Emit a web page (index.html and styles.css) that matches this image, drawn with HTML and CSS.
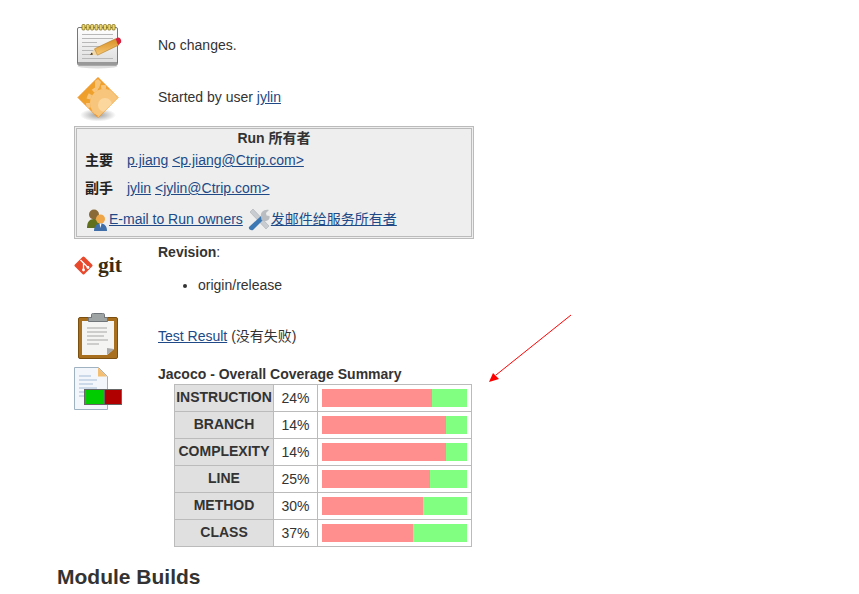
FILE: index.html
```html
<!DOCTYPE html>
<html lang="zh">
<head>
    <meta charset="utf-8" />
    <title>Build</title>
    <link rel="stylesheet" href="styles.css">
</head>
<body>
<div id="main">
    <div class="row row-changes">
        <div class="icon">
            <svg width="48" height="48" viewBox="0 0 48 48">
                <defs>
                    <linearGradient id="padg" x1="0" y1="0" x2="0" y2="1"><stop offset="0" stop-color="#fff"/><stop offset="1" stop-color="#dcdcdc"/></linearGradient>
                    <linearGradient id="peng" x1="0" y1="0" x2="0" y2="1"><stop offset="0" stop-color="#d98f25"/><stop offset="1" stop-color="#f6c873"/></linearGradient>
                </defs>
                <ellipse cx="23.500" cy="44" rx="20" ry="2.500" fill="#ddd"/>
                <rect x="3.500" y="5.500" width="40" height="37.500" rx="1.500" fill="url(#padg)" stroke="#777"/>
                <rect x="4" y="40" width="39" height="3" fill="#999"/>
                <path d="M8 12.500h31M8 16.500h31M8 20.500h15M8 24.500h31M8 28.500h22M8 32.500h10M8 36.500h31" stroke="#b8b8b8"/>
                <g fill="#ecd86e" stroke="#85701a" stroke-width=".8">
                    <rect x="8" y="2.500" width="3" height="5.500" rx="1"/>
                    <rect x="12.300" y="2.500" width="3" height="5.500" rx="1"/>
                    <rect x="16.600" y="2.500" width="3" height="5.500" rx="1"/>
                    <rect x="20.900" y="2.500" width="3" height="5.500" rx="1"/>
                    <rect x="25.200" y="2.500" width="3" height="5.500" rx="1"/>
                    <rect x="29.500" y="2.500" width="3" height="5.500" rx="1"/>
                    <rect x="33.800" y="2.500" width="3" height="5.500" rx="1"/>
                    <rect x="38.100" y="2.500" width="3" height="5.500" rx="1"/>
                </g>
                <path d="M16 33l4.500-6.200 3 6.400z" fill="#f1d9ae"/>
                <path d="M16 33l1.800-2.500 1.200 2.100z" fill="#3a2a10"/>
                <path d="M20.500 26.800l21-10 3 6.400-21 10z" fill="url(#peng)" stroke="#a86f17" stroke-width=".5"/>
                <path d="M41.500 16.800l2.500-1.200c2-.5 3.800 2.800 3 4.600l-2.500 3z" fill="#d9213c"/>
            </svg>
        </div>
        <div class="text">No changes.</div>
    </div>
    <div class="row row-cause">
        <div class="icon">
            <svg width="48" height="48" viewBox="0 0 48 48">
                <defs>
                    <linearGradient id="diag" x1="0" y1="0" x2="1" y2="1"><stop offset="0" stop-color="#ec9a20"/><stop offset="1" stop-color="#f4ad45"/></linearGradient>
                    <radialGradient id="shad"><stop offset="0" stop-color="#9c9c9c"/><stop offset="1" stop-color="#fff"/></radialGradient>
                    <clipPath id="diaclip"><path d="M24 3.500L44 23.500 24 43.500 4 23.500z"/></clipPath>
                </defs>
                <ellipse cx="24" cy="41" rx="18" ry="6.500" fill="url(#shad)"/>
                <path d="M24 3.500L44 23.500 24 43.500 4 23.500z" fill="url(#diag)" stroke="#f2901e"/>
                <g clip-path="url(#diaclip)">
                    <circle cx="30" cy="29" r="14" fill="#f8c57c"/>
                    <circle cx="30" cy="29" r="16" fill="none" stroke="#f8c57c" stroke-width="4" stroke-dasharray="5 4"/>
                    <circle cx="31" cy="31" r="7" fill="#fbd79e"/>
                    <path d="M21 7l3-2 3 3-2 6-4 3z" fill="#f7c477"/>
                </g>
            </svg>
        </div>
        <div class="text">Started by user <a href="#">jylin</a></div>
    </div>
    <div class="owners">
        <div class="owners-title">Run 所有者</div>
        <div class="owner-line"><b>主要</b><span><a href="#">p.jiang</a> <a href="#">&lt;p.jiang@Ctrip.com&gt;</a></span></div>
        <div class="owner-line"><b>副手</b><span><a href="#">jylin</a> <a href="#">&lt;jylin@Ctrip.com&gt;</a></span></div>
        <div class="owner-links">
            <svg class="small-icon" width="24" height="24" viewBox="0 0 24 24">
                <circle cx="9" cy="7.500" r="5" fill="#8a6a36"/>
                <path d="M2 21c0-6 2.500-9 7-9s6 3 6 9z" fill="#5f6f1e"/>
                <circle cx="15.500" cy="12" r="4.500" fill="#eea648"/>
                <path d="M9 24c0-5 2.500-7.500 6.500-7.500S22 19 22 24z" fill="#3f6ea8"/>
                <path d="M14.500 16.500h2l-1 4.500z" fill="#fff"/>
            </svg>
            <a href="#">E-mail to Run owners</a>
            <svg class="small-icon tools" width="24" height="24" viewBox="0 0 24 24">
                <path d="M3 5l3-3 16 17-3 3z" fill="#c9ccd0" stroke="#a2a6ab" stroke-width=".5"/>
                <path d="M2 20L14 9l3 3L6 23c-2 1-5-1-4-3z" fill="#3c78b4"/>
                <path d="M14 10c-1-5 3-8 8-7l-3 3 .5 2.500 3 .5c1 4-4 7-8 4z" fill="#b9bdc2"/>
            </svg>
            <a href="#">发邮件给服务所有者</a>
        </div>
    </div>
    <div class="row row-git">
        <div class="icon">
            <svg width="48" height="48" viewBox="0 0 48 48">
                <rect x="2.700" y="14.700" width="13.600" height="13.600" rx="1.500" transform="rotate(45 9.500 21.500)" fill="#e8492d"/>
                <path d="M6.500 16l6 6M9.500 19v7M9.500 19l4.500 4.500" stroke="#fff" stroke-width="1.300" fill="none"/>
                <circle cx="9.500" cy="26" r="1.400" fill="#fff"/>
                <circle cx="14" cy="23.500" r="1.400" fill="#fff"/>
                <text x="24" y="27.500" class="git-word">git</text>
            </svg>
        </div>
        <div class="text">
            <div><b>Revision</b>:</div>
            <ul class="branches"><li>origin/release</li></ul>
        </div>
    </div>
    <div class="row row-test">
        <div class="icon">
            <svg width="48" height="48" viewBox="0 0 48 48">
                <rect x="4.500" y="5.500" width="39" height="41" rx="1.500" fill="#a8701e" stroke="#7b4f10"/>
                <path d="M8 9h32v28l-7 6H8z" fill="#f4f4f2"/>
                <path d="M33 43l7-6-7-1z" fill="#a9a9a9"/>
                <path d="M13 16h20M13 20h20M13 24h17M13 28h21M13 32h12" stroke="#c0c0be" stroke-width="1.500"/>
                <path d="M14.500 9.500v-4h3v-3c0-1 1-1 2-1h9c1 0 2 0 2 1v3h3v4z" fill="#9ea3a3" stroke="#70757a"/>
            </svg>
        </div>
        <div class="text"><a href="#">Test Result</a> (没有失败)</div>
    </div>
    <div class="row row-jacoco">
        <div class="icon">
            <svg width="48" height="48" viewBox="0 0 48 48">
                <path d="M.500.500h24l9 9v33H.500z" fill="#f3f6fa" stroke="#9fb2c2"/>
                <path d="M24 .500l9 9h-9z" fill="#f3bd72"/>
                <path d="M5 9h12M5 13h18M5 17h14M5 21h18M5 25h14M5 29h8" stroke="#bfd0e4" stroke-width="1.500"/>
                <rect x="10" y="22" width="38" height="16" fill="#666"/>
                <rect x="11" y="23" width="19" height="14" fill="#0c0"/>
                <rect x="31" y="23" width="16" height="14" fill="#b00000"/>
            </svg>
        </div>
        <div class="text">
            <div class="jacoco-title">Jacoco - Overall Coverage Summary</div>
            <table class="coverage">
                <tr><th>INSTRUCTION</th><td class="pct">24%</td><td class="graph"><div class="bar"><div class="covered" style="width:76%"></div></div></td></tr>
                <tr><th>BRANCH</th><td class="pct">14%</td><td class="graph"><div class="bar"><div class="covered" style="width:85.500%"></div></div></td></tr>
                <tr><th>COMPLEXITY</th><td class="pct">14%</td><td class="graph"><div class="bar"><div class="covered" style="width:85.500%"></div></div></td></tr>
                <tr><th>LINE</th><td class="pct">25%</td><td class="graph"><div class="bar"><div class="covered" style="width:74.500%"></div></div></td></tr>
                <tr><th>METHOD</th><td class="pct">30%</td><td class="graph"><div class="bar"><div class="covered" style="width:69.500%"></div></div></td></tr>
                <tr><th>CLASS</th><td class="pct">37%</td><td class="graph"><div class="bar"><div class="covered" style="width:63%"></div></div></td></tr>
            </table>
        </div>
    </div>
    <h2 class="modules">Module Builds</h2>
</div>
<svg class="arrow" width="859" height="594" viewBox="0 0 859 594">
    <path d="M571 315L496 375" stroke="#f00" fill="none"/>
    <path d="M489 382l4-9 6 6z" fill="#f00"/>
</svg>
</body>
</html>
```

FILE: styles.css
```css
html {
    background: #fff;
}
body {
    margin: 0;
    height: 594px;
    overflow: hidden;
    position: relative;
    font-family: "Liberation Sans", "Noto Sans CJK SC", sans-serif;
    font-size: 14px;
    line-height: 16px;
    color: #333;
}
a {
    color: #204a87;
    text-decoration: underline;
}
#main {
    padding: 22px 0 0 57px;
}
.row {
    display: flex;
    margin-left: 17px;
}
.icon {
    width: 84px;
    flex: none;
}
.icon svg {
    display: block;
}
.row-changes {
    height: 52px;
}
.row-changes .text {
    padding-top: 15px;
}
.row-cause {
    height: 52px;
}
.row-cause .text {
    padding-top: 15px;
}

.owners {
    box-sizing: border-box;
    width: 400px;
    height: 113px;
    margin-left: 17px;
    border: 3px double #bbb;
    background: #eee;
    padding: 1px 0 0 8px;
}
.owners-title {
    font-weight: bold;
    text-align: center;
    margin-left: -8px;
}
.owner-line {
    display: flex;
    margin-top: 6px;
    height: 22px;
}
.owner-line b {
    width: 42px;
    color: #222;
}
.owner-links {
    display: flex;
    align-items: center;
    margin-top: 5px;
}
.small-icon {
    flex: none;
}
.tools {
    margin-left: 4px;
}

.row-git {
    height: 64px;
    margin-top: 5px;
}
.branches {
    margin: 17px 0 0;
    padding: 0 0 0 40px;
}
.row-test {
    height: 55px;
    margin-top: 4px;
}
.row-test .text {
    padding-top: 16px;
}
.row-jacoco {
    height: 198px;
}
.jacoco-title {
    font-weight: bold;
    margin-top: -1px;
}
.coverage {
    border-collapse: collapse;
    margin: 2px 0 0 16px;
    width: 298px;
    table-layout: fixed;
}
.coverage th, .coverage td {
    border: 1px solid #bbb;
    height: 26px;
    padding: 0;
    text-align: center;
}
.coverage th {
    width: 98px;
    background: #e0e0e0;
    padding-bottom: 2px;
    height: 24px;
}
.coverage .pct {
    width: 43px;
    background: #fff;
}
.coverage .graph {
    padding: 0 4px;
}
.bar {
    height: 18px;
    background: #80ff80;
}
.covered {
    height: 18px;
    background: #ff8f8f;
}
.modules {
    margin: 0;
    font-size: 21px;
    line-height: 24px;
    font-weight: bold;
    color: #333;
}
.git-word {
    font-family: "Liberation Serif", serif;
    font-size: 21.500px;
    font-weight: bold;
    fill: #3a2c12;
}
.arrow {
    position: absolute;
    left: 0;
    top: 0;
    pointer-events: none;
}
```
